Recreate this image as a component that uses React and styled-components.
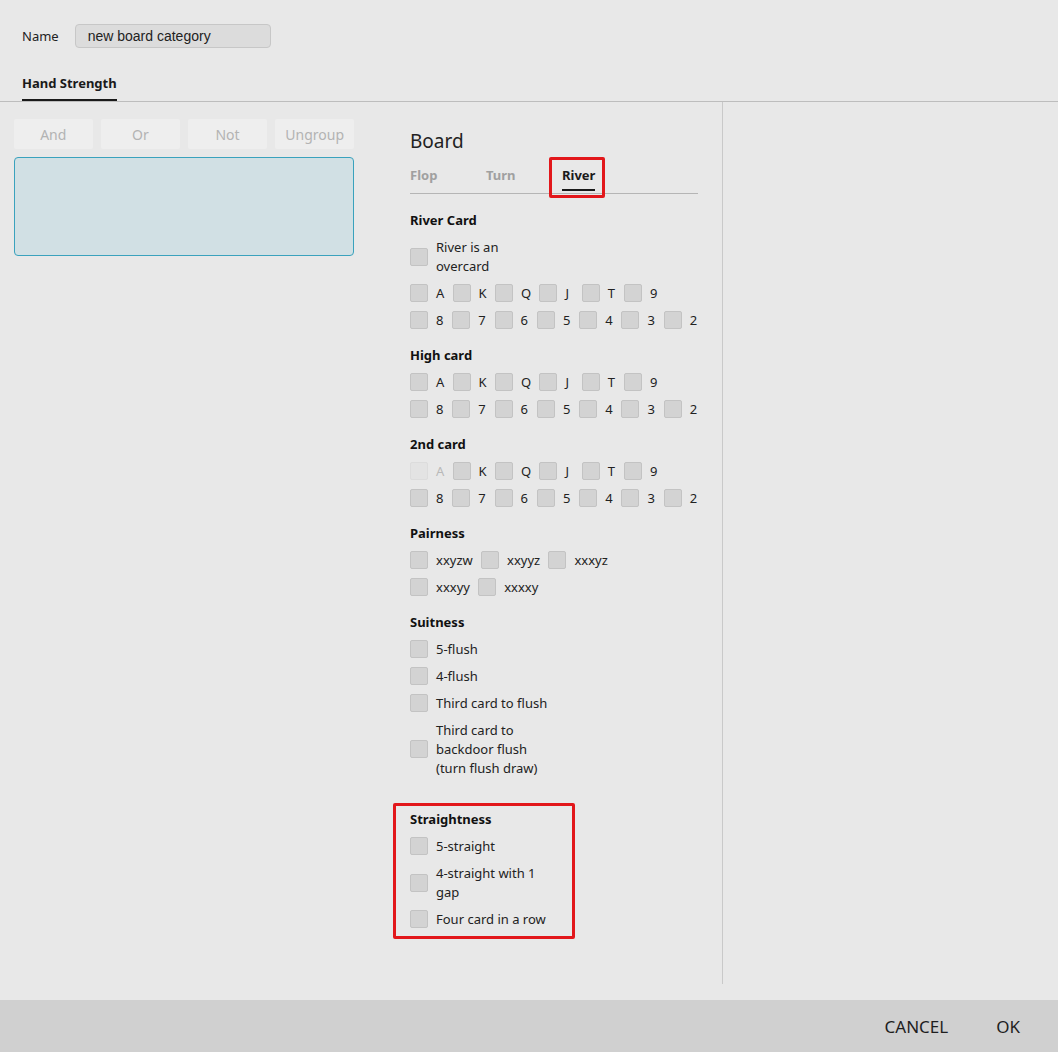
import styled, { createGlobalStyle } from "styled-components";

/* =======================
   Global
======================= */

const GlobalStyle = createGlobalStyle`
  html, body {
    margin: 0;
    padding: 0;
    background: #e8e8e8;
    font-family: "Noto Sans", "Open Sans", sans-serif;
    color: #1e1e1e;
  }
  * { box-sizing: border-box; }
`;

const Page = styled.div`
  height: 100vh;
  display: flex;
  flex-direction: column;
  background: #e8e8e8;
`;

/* =======================
   Header
======================= */

const Header = styled.header`
  padding: 24px 22px 0;
`;

const NameRow = styled.div`
  display: flex;
  align-items: center;
  gap: 16px;
  height: 24px;
`;

const NameLabel = styled.span`
  font-size: 13px;
  color: #222;
`;

const NameInput = styled.div`
  width: 196px;
  height: 24px;
  padding-left: 12px;
  display: flex;
  align-items: center;
  background: #dcdcdc;
  border: 1px solid #c7c7c7;
  border-radius: 4px;
  font-family: "Liberation Sans", Arial, sans-serif;
  font-size: 14px;
  color: #222;
`;

const MainTab = styled.div`
  display: inline-block;
  margin-top: 25px;
  line-height: 20px;
  padding-bottom: 6px;
  border-bottom: 2px solid #1a1a1a;
  font-size: 13px;
  font-weight: 700;
  color: #1a1a1a;
`;

/* =======================
   Body
======================= */

const Body = styled.main`
  flex: 1;
  display: flex;
  border-top: 1px solid #bdbdbd;
  padding-bottom: 16px;
`;

const LeftPanel = styled.section`
  width: 368px;
  padding: 17px 14px 0;
`;

const OpGrid = styled.div`
  display: grid;
  grid-template-columns: repeat(4, 1fr);
  gap: 8.6px;
`;

const OpButton = styled.button`
  height: 30px;
  border: none;
  border-radius: 2px;
  background: #eeeeee;
  color: #b3b3b3;
  font-family: inherit;
  font-size: 14px;
`;

const ExprBox = styled.div`
  margin-top: 8px;
  height: 99px;
  background: #d1e0e4;
  border: 1px solid #3aa2bd;
  border-radius: 4px;
`;

const BoardPanel = styled.section`
  width: 288px;
  margin-left: 42px;
  padding-top: 25px;
`;

const BoardTitle = styled.h2`
  margin: 0;
  font-size: 19px;
  font-weight: 400;
  line-height: 28px;
  color: #222;
`;

const TabBar = styled.div`
  display: flex;
  margin-top: 10px;
  padding-bottom: 2px;
  border-bottom: 1px solid #b5b5b5;
`;

const Tab = styled.div`
  width: 76px;
  font-size: 13px;
  font-weight: 700;
  color: ${(p) => (p.$active ? "#1a1a1a" : "#a0a0a0")};
`;

const TabLabel = styled.span`
  position: relative;
  display: inline-block;
  line-height: 20px;
  padding-bottom: 4px;
  border-bottom: 2px solid ${(p) => (p.$active ? "#1a1a1a" : "transparent")};
`;

/* red annotation frame drawn over the screenshot */
const Mark = styled.span`
  position: absolute;
  left: -13px;
  right: -10px;
  top: -8px;
  bottom: -9px;
  border: 3px solid #e2171b;
  border-radius: 2px;
  pointer-events: none;
`;

const Section = styled.div`
  margin-top: ${(p) => (p.$first ? "12.5px" : "8px")};
`;

const Highlight = styled.div`
  width: 182px;
  margin: 21px 0 0 -17px;
  padding: 0 0 3px 14px;
  border: 3px solid #e2171b;
  border-radius: 2px;
`;

const SectionTitle = styled.div`
  height: 27px;
  line-height: 27px;
  font-size: 13px;
  font-weight: 700;
  color: #111;
`;

const Row = styled.div`
  display: flex;
  align-items: center;
  flex-wrap: nowrap;
  min-height: 27px;
  padding: 4px 0;
`;

const Option = styled.label`
  display: flex;
  align-items: center;
  margin-right: 8.3px;
`;

const Box = styled.span`
  flex: none;
  width: 18px;
  height: 18px;
  border-radius: 2px;
  background: ${(p) => (p.$disabled ? "#e3e3e3" : "#d3d3d3")};
  border: 1px solid ${(p) => (p.$disabled ? "#dcdcdc" : "#c3c3c3")};
`;

const OptionText = styled.span`
  margin-left: 8px;
  min-width: 8px;
  font-size: 13px;
  line-height: 19px;
  white-space: nowrap;
  color: ${(p) => (p.$disabled ? "#b8b8b8" : "#222")};
`;

const RightPanel = styled.section`
  flex: 1;
  margin-left: 24px;
  border-left: 1px solid #c9c9c9;
`;

/* =======================
   Footer
======================= */

const Footer = styled.footer`
  height: 52px;
  display: flex;
  align-items: center;
  justify-content: flex-end;
  gap: 16px;
  padding-right: 22px;
  background: #d0d0d0;
`;

const FooterButton = styled.button`
  padding: 0 16px;
  height: 36px;
  border: none;
  background: transparent;
  font-family: inherit;
  font-size: 17px;
  color: #1e1e1e;
`;

/* =======================
   Data
======================= */

const RANKS_TOP = ["A", "K", "Q", "J", "T", "9"];
const RANKS_BOTTOM = ["8", "7", "6", "5", "4", "3", "2"];

function Check({ label, disabled }) {
  return (
    <Option>
      <Box $disabled={disabled} />
      <OptionText $disabled={disabled}>{label}</OptionText>
    </Option>
  );
}

function RankRows({ disabledA }) {
  return (
    <>
      <Row>
        {RANKS_TOP.map((r) => (
          <Check key={r} label={r} disabled={disabledA && r === "A"} />
        ))}
      </Row>
      <Row>
        {RANKS_BOTTOM.map((r) => (
          <Check key={r} label={r} />
        ))}
      </Row>
    </>
  );
}

function Lines({ lines }) {
  return lines.map((l, i) => (
    <span key={i}>
      {i > 0 && <br />}
      {l}
    </span>
  ));
}

export default function App() {
  return (
    <Page>
      <GlobalStyle />
      <Header>
        <NameRow>
          <NameLabel>Name</NameLabel>
          <NameInput>new board category</NameInput>
        </NameRow>
        <MainTab>Hand Strength</MainTab>
      </Header>

      <Body>
        <LeftPanel>
          <OpGrid>
            <OpButton>And</OpButton>
            <OpButton>Or</OpButton>
            <OpButton>Not</OpButton>
            <OpButton>Ungroup</OpButton>
          </OpGrid>
          <ExprBox />
        </LeftPanel>

        <BoardPanel>
          <BoardTitle>Board</BoardTitle>
          <TabBar>
            <Tab><TabLabel>Flop</TabLabel></Tab>
            <Tab><TabLabel>Turn</TabLabel></Tab>
            <Tab $active>
              <TabLabel $active>
                River
                <Mark />
              </TabLabel>
            </Tab>
          </TabBar>

          <Section $first>
            <SectionTitle>River Card</SectionTitle>
            <Row>
              <Check label={<Lines lines={["River is an", "overcard"]} />} />
            </Row>
            <RankRows />
          </Section>

          <Section>
            <SectionTitle>High card</SectionTitle>
            <RankRows />
          </Section>

          <Section>
            <SectionTitle>2nd card</SectionTitle>
            <RankRows disabledA />
          </Section>

          <Section>
            <SectionTitle>Pairness</SectionTitle>
            <Row>
              <Check label="xxyzw" />
              <Check label="xxyyz" />
              <Check label="xxxyz" />
            </Row>
            <Row>
              <Check label="xxxyy" />
              <Check label="xxxxy" />
            </Row>
          </Section>

          <Section>
            <SectionTitle>Suitness</SectionTitle>
            <Row><Check label="5-flush" /></Row>
            <Row><Check label="4-flush" /></Row>
            <Row><Check label="Third card to flush" /></Row>
            <Row>
              <Check
                label={
                  <Lines
                    lines={["Third card to", "backdoor flush", "(turn flush draw)"]}
                  />
                }
              />
            </Row>
          </Section>

          <Highlight>
            <SectionTitle>Straightness</SectionTitle>
            <Row><Check label="5-straight" /></Row>
            <Row>
              <Check label={<Lines lines={["4-straight with 1", "gap"]} />} />
            </Row>
            <Row><Check label="Four card in a row" /></Row>
          </Highlight>
        </BoardPanel>

        <RightPanel />
      </Body>

      <Footer>
        <FooterButton>CANCEL</FooterButton>
        <FooterButton>OK</FooterButton>
      </Footer>
    </Page>
  );
}
